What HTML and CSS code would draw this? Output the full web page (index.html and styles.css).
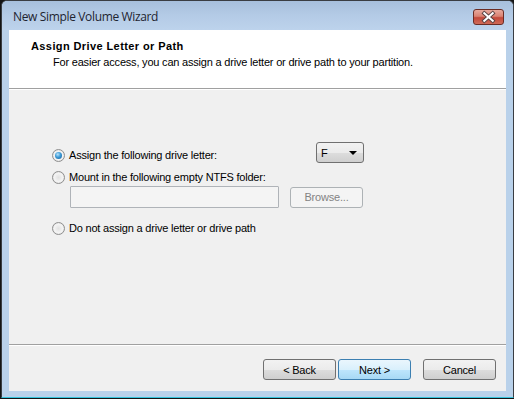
FILE: index.html
```html
<!DOCTYPE html>
<html lang="en">
<head>
  <meta charset="UTF-8" />
  <title>New Simple Volume Wizard</title>
  <link rel="stylesheet" href="styles.css">
</head>
<body>
  <div class="window">
    <div class="titlebar">
      <span class="title">New Simple Volume Wizard</span>
      <div class="close-btn">
        <svg viewBox="0 0 31 16" width="31" height="16" xmlns="http://www.w3.org/2000/svg">
          <path d="M11 4l9 8M20 4l-9 8" stroke="#5a4444" stroke-width="4.2" stroke-linecap="square"/>
          <path d="M11 4l9 8M20 4l-9 8" stroke="#ffffff" stroke-width="2.2" stroke-linecap="square"/>
        </svg>
      </div>
    </div>

    <div class="client">
      <div class="header">
        <div class="heading">Assign Drive Letter or Path</div>
        <div class="subheading">For easier access, you can assign a drive letter or drive path to your partition.</div>
      </div>

      <div class="content">
        <div class="letter-row">
          <div class="opt first">
            <span class="radio checked"></span>
            <span>Assign the following drive letter:</span>
          </div>
          <div class="combo">
            <span>F</span>
            <span class="arrow"></span>
          </div>
        </div>

        <div class="opt second">
          <span class="radio"></span>
          <span>Mount in the following empty NTFS folder:</span>
        </div>
        <div class="folder-row">
          <div class="textbox"></div>
          <div class="btn disabled">Browse...</div>
        </div>

        <div class="opt third">
          <span class="radio"></span>
          <span>Do not assign a drive letter or drive path</span>
        </div>
      </div>

      <div class="footer">
        <div class="btn">&lt; Back</div>
        <div class="btn default">Next &gt;</div>
        <div class="btn cancel">Cancel</div>
      </div>
    </div>
  </div>
</body>
</html>
```

FILE: styles.css
```css
* { box-sizing: border-box; }
body {
  margin: 0;
  background: #141414;
  font-family: 'Liberation Sans', Arial, sans-serif;
  font-size: 11px;
  letter-spacing: -0.2px;
  color: #000;
}
.window {
  margin-left: 1px;
  width: 513px;
  height: 398px;
  display: flex;
  flex-direction: column;
  background: #b9d1ea;
  border: 1px solid #3a3d42;
  border-bottom-color: #35c4dc;
  border-radius: 6px 6px 0 0;
  padding-bottom: 6px;
}
.titlebar {
  height: 29px;
  display: flex;
  align-items: flex-start;
  justify-content: space-between;
  padding-left: 11px;
  background: linear-gradient(180deg, #a7bfdc 0%, #b4cbe6 50%, #bdd3ec 100%);
  border-radius: 5px 5px 0 0;
}
.title {
  font-family: 'Open Sans', 'Liberation Sans', sans-serif;
  font-size: 12px;
  letter-spacing: -0.35px;
  color: #1e2430;
  margin-top: 8px;
  line-height: 16px;
}
.close-btn {
  width: 31px;
  height: 16px;
  margin-top: 8px;
  margin-right: 9px;
  border: 1px solid #6b2c24;
  border-radius: 3px;
  background: linear-gradient(180deg, #e8a99d 0%, #d98272 45%, #c3483a 55%, #cf6b58 100%);
  display: flex;
  align-items: center;
  justify-content: center;
  overflow: hidden;
}
.close-btn svg { display: block; }
.client {
  flex: 1;
  margin: 0 7px;
  background: #f0f0f0;
  display: flex;
  flex-direction: column;
}
.header {
  height: 59px;
  background: #fff;
  border-bottom: 1px solid #a0a0a0;
  padding: 10px 0 0 22px;
}
.heading {
  font-weight: bold;
  letter-spacing: 0.4px;
  line-height: 13px;
}
.subheading {
  margin: 3px 0 0 22px;
  line-height: 13px;
}
.content {
  flex: 1;
  border-top: 1px solid #fff;
  padding: 52px 0 0 43px;
}
.letter-row {
  width: 312px;
  display: flex;
  justify-content: space-between;
  align-items: flex-start;
}
.opt {
  display: flex;
  align-items: center;
  gap: 4px;
  height: 13px;
  line-height: 13px;
}
.opt.first { margin-top: 7px; }
.opt.second { margin-top: 8px; }
.opt.third { margin-top: 14px; }
.radio {
  width: 13px;
  height: 13px;
  border-radius: 50%;
  border: 1px solid #8f8f8f;
  background: radial-gradient(circle at 50% 50%, #e2e2e2 0%, #f4f4f4 55%, #c8c8c8 100%);
  position: relative;
  flex-shrink: 0;
}
.radio.checked::after {
  content: "";
  position: absolute;
  left: 2px;
  top: 2px;
  width: 7px;
  height: 7px;
  border-radius: 50%;
  background: radial-gradient(circle at 40% 35%, #b9e3fb 0%, #3c9ad6 45%, #175a93 100%);
}
.combo {
  width: 48px;
  height: 21px;
  border: 1px solid #707070;
  border-radius: 3px;
  background: linear-gradient(180deg, #f2f2f2 0%, #ebebeb 50%, #dddddd 51%, #cfcfcf 100%);
  display: flex;
  align-items: center;
  justify-content: space-between;
  padding: 0 6px 0 4px;
}
.arrow {
  width: 0;
  height: 0;
  border-left: 4px solid transparent;
  border-right: 4px solid transparent;
  border-top: 4px solid #000;
}
.folder-row {
  display: flex;
  align-items: center;
  margin: 2px 0 0 18px;
}
.textbox {
  width: 209px;
  height: 22px;
  border: 1px solid #afb3b8;
  background: #f4f4f4;
  border-radius: 1px;
}
.btn {
  width: 73px;
  height: 21px;
  border: 1px solid #707070;
  border-radius: 3px;
  background: linear-gradient(180deg, #f2f2f2 0%, #ebebeb 50%, #dddddd 51%, #cfcfcf 100%);
  display: flex;
  align-items: center;
  justify-content: center;
  flex-shrink: 0;
}
.btn.disabled {
  margin-left: 11px;
  background: #f4f4f4;
  border-color: #adb2b5;
  color: #838383;
}
.btn.default {
  margin-left: 2px;
  border-color: #3c7fb1;
  background: linear-gradient(180deg, #eaf6fd 0%, #d9f0fc 50%, #bee6fd 51%, #a7d9f5 100%);
}
.btn.cancel { margin-left: 12px; }
.footer {
  height: 47px;
  border-top: 1px solid #a0a0a0;
  box-shadow: inset 0 1px 0 #fff;
  display: flex;
  justify-content: flex-end;
  align-items: flex-start;
  padding: 14px 10px 0 0;
}
```
